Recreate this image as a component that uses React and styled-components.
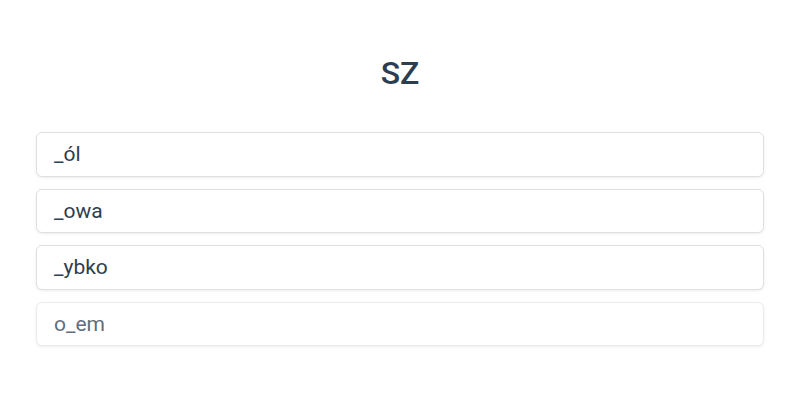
import React from "react";
import styled, { createGlobalStyle } from "styled-components";

const Global = createGlobalStyle`
  html, body { margin: 0; padding: 0; background: #ffffff; }
  body { font-family: Roboto, "Noto Sans", sans-serif; }
`;

const Page = styled.div`
  width: 800px;
  height: 400px;
  box-sizing: border-box;
  padding: 52px 36px 0;
  display: flex;
  flex-direction: column;
`;

const Title = styled.h1`
  margin: 0 0 38px;
  text-align: center;
  font-size: 32px;
  line-height: 42px;
  font-weight: 500;
  color: #2c3e50;
`;

const List = styled.div`
  display: flex;
  flex-direction: column;
  gap: 12px;
`;

const Option = styled.div`
  height: 44.5px;
  box-sizing: border-box;
  display: flex;
  align-items: center;
  padding: 0 17px;
  border: 1px solid ${(p) => (p.$muted ? "#ececec" : "#e0e0e0")};
  border-radius: 6px;
  box-shadow: 0 1px 3px rgba(0, 0, 0, 0.08);
  background: #fff;
  font-size: 21px;
  color: ${(p) => (p.$muted ? "#5e6e80" : "#2c3e50")};
`;

const items = [
  { t: "_ól" },
  { t: "_owa" },
  { t: "_ybko" },
  { t: "o_em", muted: true },
];

export default function App() {
  return (
    <>
      <Global />
      <Page>
        <Title>SZ</Title>
        <List>
          {items.map((it) => (
            <Option key={it.t} $muted={it.muted}>
              {it.t}
            </Option>
          ))}
        </List>
      </Page>
    </>
  );
}
